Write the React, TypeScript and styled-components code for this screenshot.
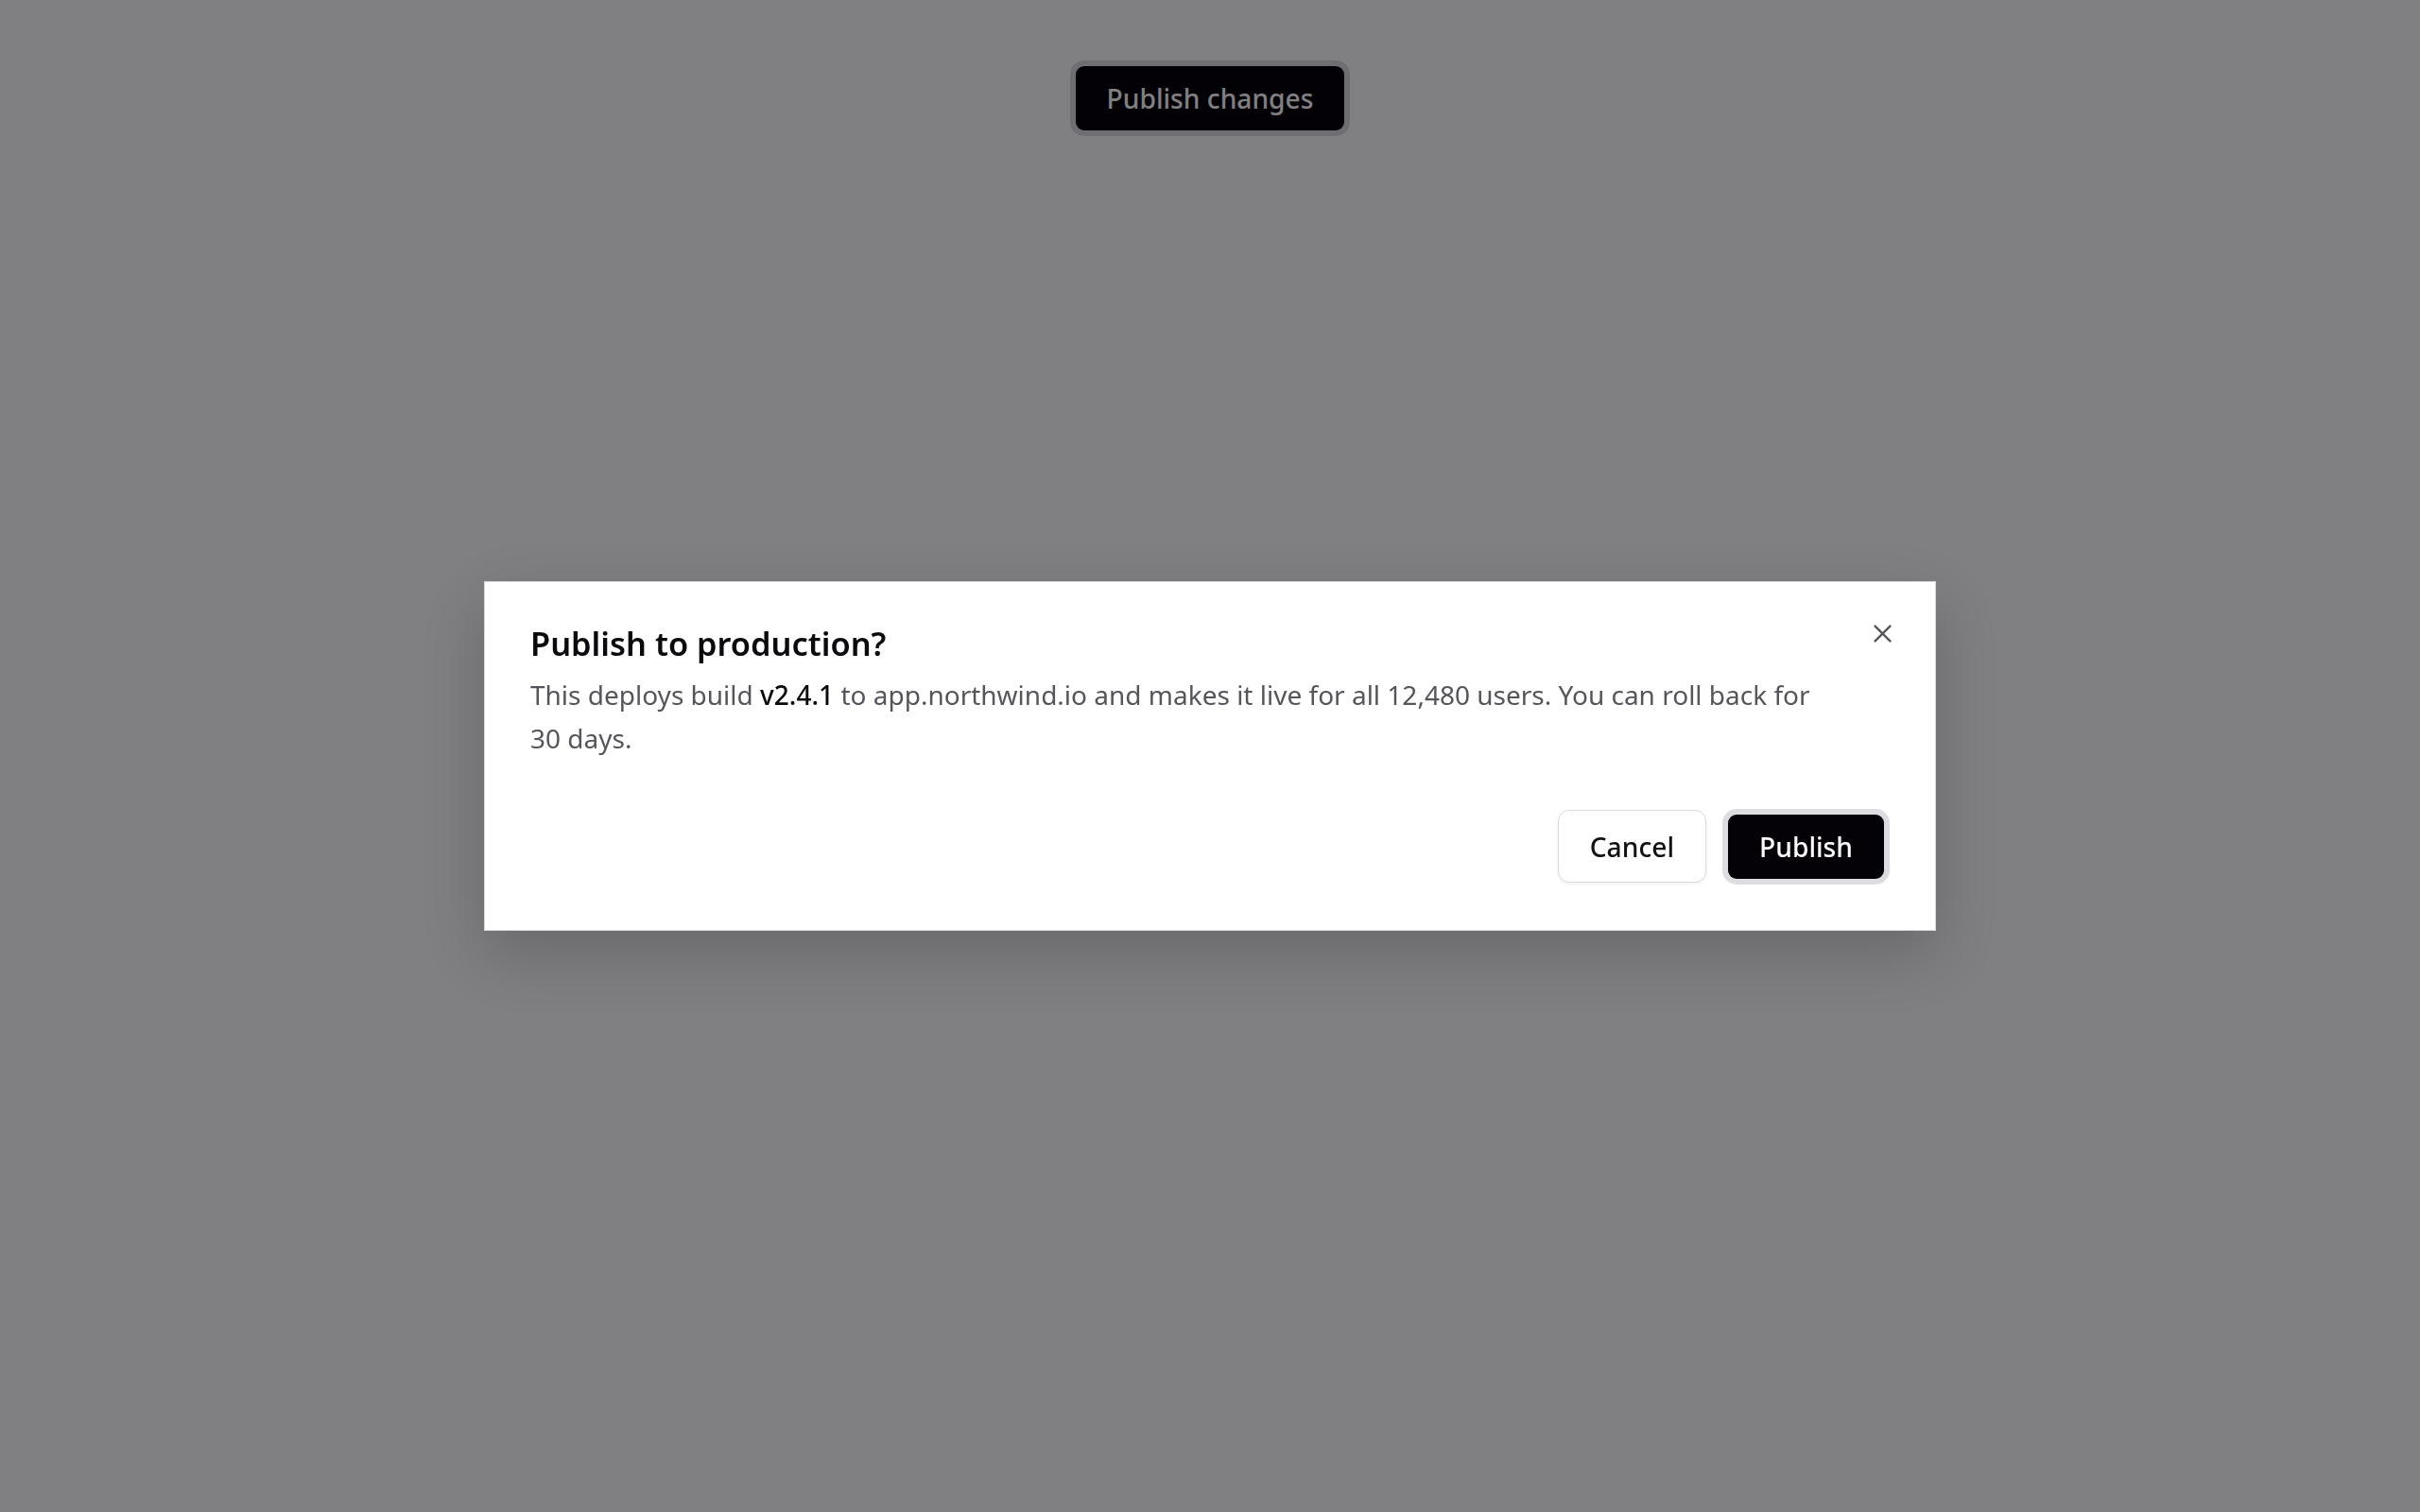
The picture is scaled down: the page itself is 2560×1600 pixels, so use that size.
import React from 'react'
import styled, { createGlobalStyle } from 'styled-components'

const GlobalStyle = createGlobalStyle`
  html, body {
    margin: 0;
    padding: 0;
    background: #ffffff;
    font-family: 'Noto Sans', 'Open Sans', sans-serif;
  }
`

const Page = styled.div`
  min-height: 100vh;
  display: flex;
  justify-content: center;
  align-items: flex-start;
  padding-top: 70px;
  box-sizing: border-box;
`

const PrimaryButton = styled.button`
  height: 68px;
  padding: 0 33px;
  border: none;
  border-radius: 9px;
  background: #040206;
  color: #ffffff;
  font-family: 'Noto Sans', sans-serif;
  font-size: 28.2px;
  font-weight: 500;
  box-shadow: 0 0 0 6px #dcdce1;
  cursor: pointer;
`

const GhostButton = styled.button`
  height: 77px;
  padding: 0 33px;
  border: 1.5px solid #dadade;
  border-radius: 12px;
  background: #ffffff;
  color: #111014;
  font-family: 'Noto Sans', sans-serif;
  font-size: 28.2px;
  font-weight: 500;
  box-shadow: 0 2px 4px rgba(0, 0, 0, 0.06);
  cursor: pointer;
`

const Backdrop = styled.div`
  position: fixed;
  inset: 0;
  background: rgba(2, 0, 5, 0.5);
  display: flex;
  align-items: center;
  justify-content: center;
`

const Dialog = styled.div`
  position: relative;
  width: 1536px;
  box-sizing: border-box;
  padding: 44px 48px 50px 48px;
  background: #ffffff;
  border: 1px solid #d9d8dd;
  box-shadow: 0 24px 60px rgba(0, 0, 0, 0.18);
`

const Title = styled.h2`
  margin: 0;
  font-size: 34.4px;
  line-height: 1.2;
  font-weight: 600;
  color: #0b0a0e;
`

const Body = styled.p`
  margin: 11px 0 0;
  max-width: 1380px;
  font-size: 28px;
  line-height: 46px;
  color: #57555b;
`

const Strong = styled.span`
  color: #0b0a0e;
  font-weight: 500;
`

const Footer = styled.div`
  display: flex;
  justify-content: flex-end;
  align-items: center;
  gap: 23px;
  margin-top: 53px;
  padding-right: 6px;
`

const CloseButton = styled.button`
  position: absolute;
  top: 37px;
  right: 38px;
  width: 36px;
  height: 36px;
  padding: 0;
  border: none;
  background: transparent;
  color: #55545a;
  display: flex;
  align-items: center;
  justify-content: center;
  cursor: pointer;
`

const CloseIcon = () => (
  <svg width="19" height="19" viewBox="0 0 18 18" fill="none" stroke="currentColor" strokeWidth="2.2" strokeLinecap="round">
    <path d="M1.5 1.5 16.5 16.5" />
    <path d="M16.5 1.5 1.5 16.5" />
  </svg>
)

const App = () => {
  return (
    <>
      <GlobalStyle />
      <Page>
        <PrimaryButton>Publish changes</PrimaryButton>
      </Page>
      <Backdrop>
        <Dialog role="dialog" aria-modal="true">
          <CloseButton aria-label="Close">
            <CloseIcon />
          </CloseButton>
          <Title>Publish to production?</Title>
          <Body>
            This deploys build <Strong>v2.4.1</Strong> to app.northwind.io and makes it live for all 12,480 users. You can
            roll back for 30 days.
          </Body>
          <Footer>
            <GhostButton>Cancel</GhostButton>
            <PrimaryButton>Publish</PrimaryButton>
          </Footer>
        </Dialog>
      </Backdrop>
    </>
  )
}

export default App
